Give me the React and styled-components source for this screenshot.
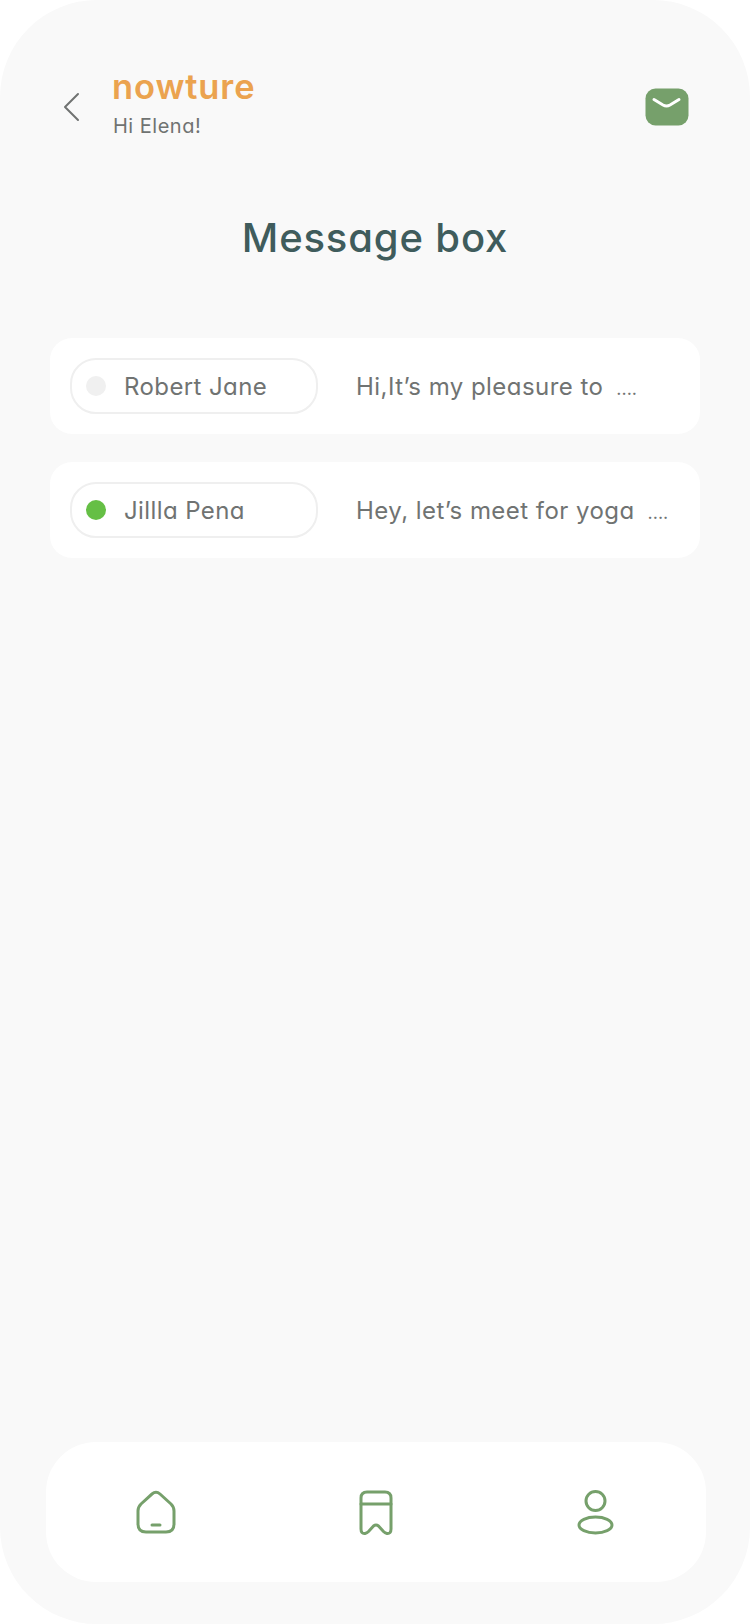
import React from "react";
import styled, { createGlobalStyle } from "styled-components";

const Green = "#76a06b";
const Grey = "#707372";

const GlobalStyle = createGlobalStyle`
  html, body {
    margin: 0;
    padding: 0;
    background: #ffffff;
  }
  body {
    font-family: Inter, "Noto Sans", sans-serif;
    font-feature-settings: "cv11";
  }
`;

const Screen = styled.div`
  width: 750px;
  height: 1624px;
  box-sizing: border-box;
  background: #f9f9f9;
  border-radius: 97px;
  padding: 0 44px 42px 46px;
  display: flex;
  flex-direction: column;
  overflow: hidden;
`;

const Header = styled.header`
  display: flex;
  align-items: flex-start;
  height: 138px;
  padding: 70px 17px 0 17px;
  box-sizing: border-box;
`;

const BackIcon = styled.svg`
  width: 18px;
  height: 30px;
  margin-top: 22px;
  margin-right: 31px;
  flex: none;
`;

const Brand = styled.div`
  display: flex;
  flex-direction: column;
  flex: 1;
`;

const Logo = styled.div`
  color: #eba34f;
  font-size: 34.5px;
  line-height: 34px;
  font-weight: 600;
  letter-spacing: 0.9px;
`;

const Greeting = styled.div`
  color: ${Grey};
  font-size: 20px;
  line-height: 24px;
  margin-top: 10px;
  margin-left: 1px;
  letter-spacing: 0.5px;
`;

const MailIcon = styled.svg`
  width: 44px;
  height: 38px;
  margin-top: 18px;
  flex: none;
`;

const Title = styled.h1`
  margin: 76px 2px 0 0;
  color: #3f5c5c;
  font-size: 40px;
  line-height: 48px;
  font-weight: 500;
  text-align: center;
  letter-spacing: 0.85px;
`;

const List = styled.div`
  display: flex;
  flex-direction: column;
  gap: 28px;
  margin: 76px 0 0 4px;
  width: 650px;
`;

const Card = styled.div`
  height: 96px;
  box-sizing: border-box;
  background: #ffffff;
  border-radius: 22px;
  padding: 20px;
  display: flex;
  align-items: center;
`;

const NamePill = styled.div`
  width: 248px;
  height: 56px;
  box-sizing: border-box;
  border: 2px solid #efefef;
  border-radius: 26px;
  padding-left: 14px;
  display: flex;
  align-items: center;
  flex: none;
`;

const StatusDot = styled.span`
  width: 20px;
  height: 20px;
  border-radius: 50%;
  background: ${(p) => (p.$online ? "#65bf45" : "#f0f0f0")};
  margin-right: 18px;
  flex: none;
`;

const Name = styled.span`
  color: ${Grey};
  font-size: 24px;
  letter-spacing: 0.4px;
  white-space: nowrap;
`;

const Preview = styled.div`
  color: ${Grey};
  font-size: 24px;
  letter-spacing: 0.45px;
  margin-left: 38px;
  white-space: nowrap;
`;

const Ellipsis = styled.span`
  font-size: 18px;
  letter-spacing: 0;
  margin-left: 13px;
`;

const BottomNav = styled.nav`
  margin-top: auto;
  height: 140px;
  width: 660px;
  background: #ffffff;
  border-radius: 50px;
  display: grid;
  grid-template-columns: repeat(3, 220px);
  justify-items: center;
  align-items: center;
`;

const NavIcon = styled.svg`
  width: 44px;
  height: 48px;
  fill: none;
  stroke: ${Green};
  stroke-width: 3;
  stroke-linecap: round;
  stroke-linejoin: round;
`;

const messages = [
  { name: "Robert Jane", text: "Hi,It’s my pleasure to", online: false },
  { name: "Jillla Pena", text: "Hey, let’s meet for yoga", online: true },
];

const App = () => {
  return (
    <Screen>
      <GlobalStyle />
      <Header>
        <BackIcon viewBox="0 0 18 30">
          <path d="M15 2 L2 15 L15 28" fill="none" stroke={Grey} strokeWidth="2" strokeLinecap="round" strokeLinejoin="round" />
        </BackIcon>
        <Brand>
          <Logo>nowture</Logo>
          <Greeting>Hi Elena!</Greeting>
        </Brand>
        <MailIcon viewBox="0 0 44 38">
          <rect x="0.5" y="0.5" width="43" height="37" rx="10" fill={Green} />
          <path d="M9 11.5 L18 17 Q21.5 19 25 17 L34 11.5" fill="none" stroke="#ffffff" strokeWidth="3" strokeLinecap="round" />
        </MailIcon>
      </Header>
      <Title>Message box</Title>
      <List>
        {messages.map((m) => (
          <Card key={m.name}>
            <NamePill>
              <StatusDot $online={m.online} />
              <Name>{m.name}</Name>
            </NamePill>
            <Preview>
              {m.text}
              <Ellipsis>....</Ellipsis>
            </Preview>
          </Card>
        ))}
      </List>
      <BottomNav>
        <NavIcon viewBox="0 0 44 48">
          <path d="M7 17 Q4 20 4 24 V37 Q4 45 12 45 H32 Q40 45 40 37 V24 Q40 20 37 17 L26 7 Q22 3.5 18 7 Z" transform="translate(0 -1)" />
          <path d="M18 37 H26" />
        </NavIcon>
        <NavIcon viewBox="0 0 44 48">
          <path d="M7 10 Q7 4 13 4 H31 Q37 4 37 10 V41 Q37 46 33 45.5 Q31 45 29.5 43.5 L24.5 38 Q22 36 19.5 38 L14.5 43.5 Q13 45 11 45.5 Q7 46 7 41 Z" />
          <path d="M7 16 H37" />
        </NavIcon>
        <NavIcon viewBox="0 0 44 48">
          <circle cx="21.5" cy="13" r="9.5" />
          <ellipse cx="21.5" cy="37" rx="16.5" ry="8" />
        </NavIcon>
      </BottomNav>
    </Screen>
  );
};

export default App;
